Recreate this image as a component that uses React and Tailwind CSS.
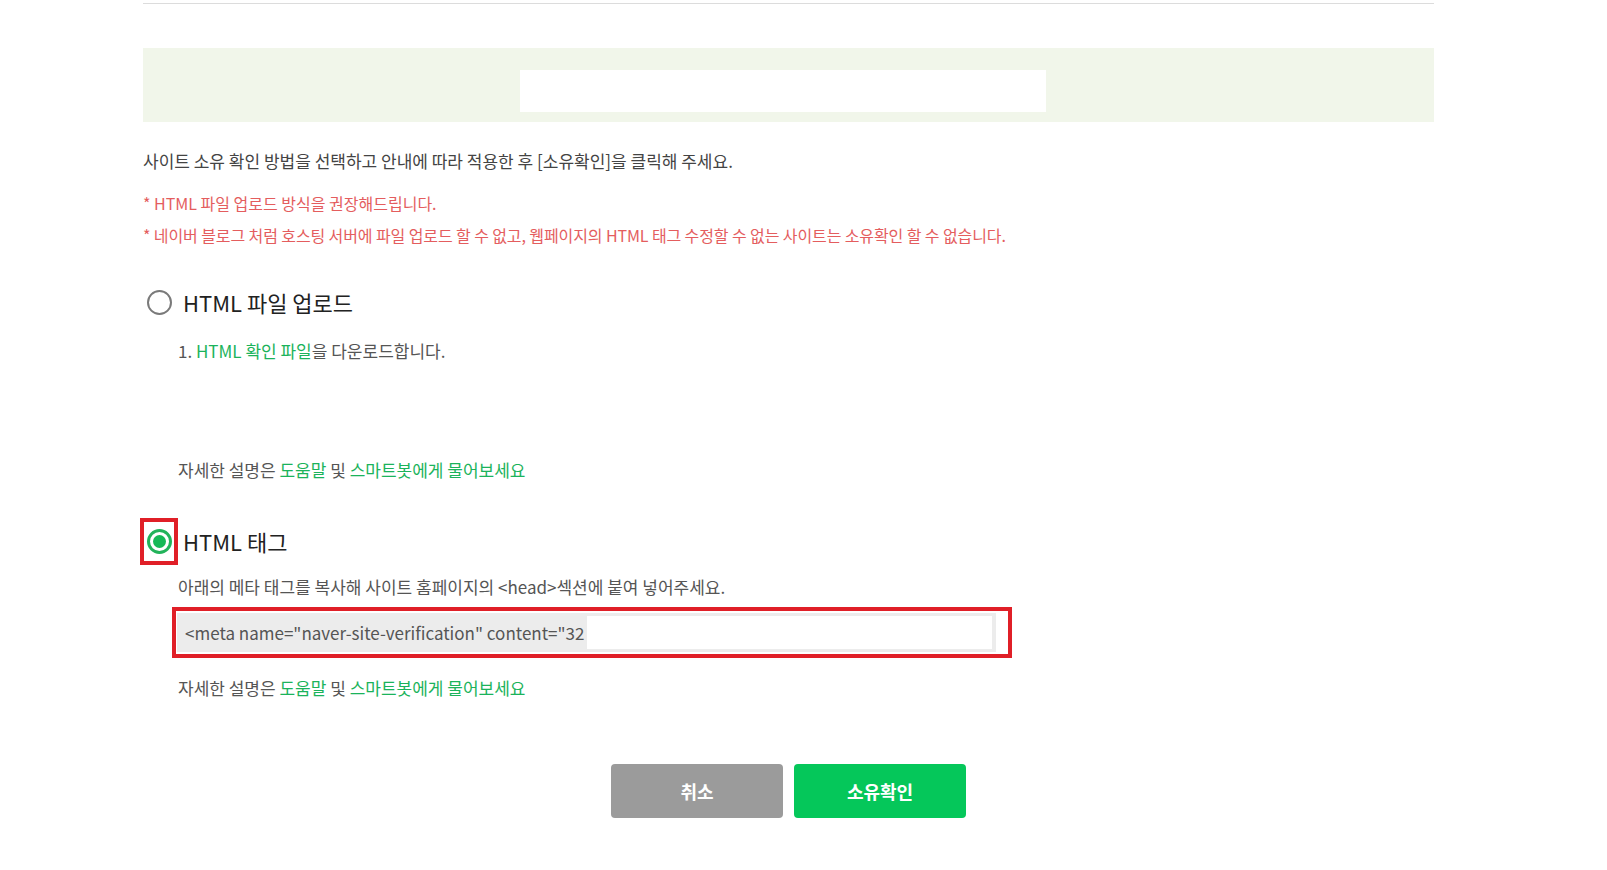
import React from 'react';

const Radio = ({ checked }) => (
  <span
    className={
      checked
        ? 'w-[25px] h-[25px] rounded-full border-[3px] border-[#22b35a] flex items-center justify-center bg-white'
        : 'w-[25px] h-[25px] rounded-full border-[2.5px] border-[#7a7a7a] bg-white'
    }
  >
    {checked && <span className="w-[13px] h-[13px] rounded-full bg-[#16b956]" />}
  </span>
);

const HelpLine = ({ className }) => (
  <p className={`h-[24px] leading-[24px] text-[17px] text-[#555] ${className}`}>
    자세한 설명은 <span className="text-[#1bb35b]">도움말</span> 및{' '}
    <span className="text-[#1bb35b]">스마트봇에게 물어보세요</span>
  </p>
);

export default function App() {
  return (
    <div
      className="w-[1607px] h-[870px] bg-white overflow-hidden"
      style={{ fontFamily: '"Noto Sans CJK KR", "Noto Sans", sans-serif' }}
    >
      <div className="ml-[143px] w-[1291px]">
        <div className="h-[3px]" />
        <div className="h-px bg-[#dcdcdc]" />

        {/* band */}
        <div className="mt-[44px] h-[74px] bg-[#f1f6ea] pt-[22px]">
          <div className="ml-[377px] w-[526px] h-[42px] bg-white" />
        </div>

        <p className="mt-[27px] h-[24px] leading-[24px] text-[17px] text-[#444]">
          사이트 소유 확인 방법을 선택하고 안내에 따라 적용한 후 [소유확인]을 클릭해 주세요.
        </p>
        <p className="mt-[18px] h-[24px] leading-[24px] text-[16px] text-[#e45d5e]">
          * HTML 파일 업로드 방식을 권장해드립니다.
        </p>
        <p className="mt-[8px] h-[24px] leading-[24px] text-[16px] text-[#e45d5e] tracking-[-0.1px]">
          * 네이버 블로그 처럼 호스팅 서버에 파일 업로드 할 수 없고, 웹페이지의 HTML 태그 수정할 수 없는 사이트는 소유확인 할 수 없습니다.
        </p>

        {/* option 1 */}
        <div className="mt-[40px] h-[30px] flex items-center -ml-[3px]">
          <span className="w-[38px] flex justify-center">
            <Radio />
          </span>
          <span className="ml-[5px] text-[22px] text-[#222]">HTML 파일 업로드</span>
        </div>
        <p className="mt-[22px] ml-[35px] h-[24px] leading-[24px] text-[17px] text-[#555]">
          1. <span className="text-[#1bb35b]">HTML 확인 파일</span>을 다운로드합니다.
        </p>
        <HelpLine className="mt-[95px] ml-[35px]" />

        {/* option 2 */}
        <div className="mt-[36px] h-[47px] flex items-center -ml-[3px]">
          <span className="w-[38px] h-[47px] border-4 border-[#e01f27] flex items-center justify-center">
            <Radio checked />
          </span>
          <span className="ml-[5px] text-[22px] text-[#222]">HTML 태그</span>
        </div>
        <p className="mt-[10px] ml-[35px] h-[24px] leading-[24px] text-[17px] text-[#555]">
          아래의 메타 태그를 복사해 사이트 홈페이지의 &lt;head&gt;섹션에 붙여 넣어주세요.
        </p>
        <div className="mt-[8px] ml-[29px] w-[840px] h-[51px] border-4 border-[#e01f27] bg-white pt-[2px] pl-[1px] pr-[12px]">
          <div className="h-[39px] bg-[#ececec] flex items-stretch p-[3px] pr-[4px]">
            <span className="pl-[5px] pr-[3px] flex items-center text-[17px] text-[#555] whitespace-nowrap">
              &lt;meta name="naver-site-verification" content="32
            </span>
            <span className="flex-1 bg-white" />
          </div>
        </div>
        <HelpLine className="mt-[18px] ml-[35px]" />

        {/* buttons */}
        <div className="mt-[64px] flex justify-center gap-[11px]">
          <button className="w-[172px] h-[54px] rounded-[4px] bg-[#9b9b9b] text-white text-[18px] font-bold">
            취소
          </button>
          <button className="w-[172px] h-[54px] rounded-[4px] bg-[#05c75a] text-white text-[18px] font-bold">
            소유확인
          </button>
        </div>
      </div>
    </div>
  );
}
